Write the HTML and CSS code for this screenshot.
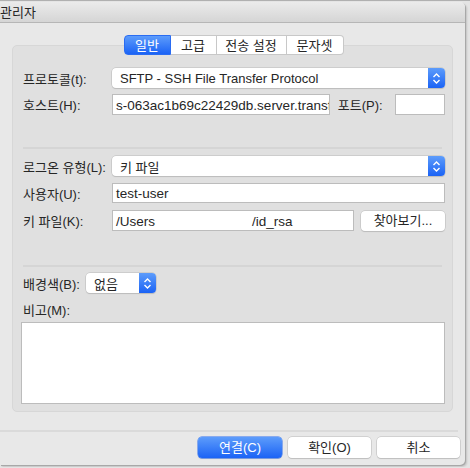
FILE: index.html
```html
<!DOCTYPE html>
<html lang="ko">
<head>
    <meta charset="UTF-8">
    <meta name="viewport" content="width=device-width, initial-scale=1.0">
    <title>관리자</title>
    <link rel="stylesheet" href="styles.css">
</head>
<body>
    <div class="window">
        <div class="titlebar">관리자</div>
        <div class="content">
            <div class="tabs">
                <div class="tab active w1">일반</div>
                <div class="tab w2">고급</div>
                <div class="tab w3">전송 설정</div>
                <div class="tab w4">문자셋</div>
            </div>
            <div class="panel">
                <div class="row r-protocol">
                    <div class="label">프로토콜(t):</div>
                    <div class="select grow">
                        <span class="select-text">SFTP - SSH File Transfer Protocol</span>
                        <span class="stepper"><svg width="9" height="13" viewBox="0 0 9 13"><path d="M1.5 5 L4.5 2 L7.5 5 M1.5 8 L4.5 11 L7.5 8" fill="none" stroke="#fff" stroke-width="1.4"/></svg></span>
                    </div>
                </div>
                <div class="row r-host">
                    <div class="label">호스트(H):</div>
                    <div class="input host"><span class="host-text">s-063ac1b69c22429db.server.transfer</span></div>
                    <div class="label port-label">포트(P):</div>
                    <div class="input port"></div>
                </div>
                <div class="sep sep1"></div>
                <div class="row r-login">
                    <div class="label">로그온 유형(L):</div>
                    <div class="select grow">
                        <span class="select-text">키 파일</span>
                        <span class="stepper"><svg width="9" height="13" viewBox="0 0 9 13"><path d="M1.5 5 L4.5 2 L7.5 5 M1.5 8 L4.5 11 L7.5 8" fill="none" stroke="#fff" stroke-width="1.4"/></svg></span>
                    </div>
                </div>
                <div class="row r-user">
                    <div class="label">사용자(U):</div>
                    <div class="input grow">test-user</div>
                </div>
                <div class="row r-key">
                    <div class="label">키 파일(K):</div>
                    <div class="input keyfile"><span class="path-start">/Users</span>/id_rsa</div>
                    <div class="button browse">찾아보기...</div>
                </div>
                <div class="sep sep2"></div>
                <div class="row r-bg">
                    <div class="label short">배경색(B):</div>
                    <div class="select color">
                        <span class="select-text">없음</span>
                        <span class="stepper"><svg width="9" height="13" viewBox="0 0 9 13"><path d="M1.5 5 L4.5 2 L7.5 5 M1.5 8 L4.5 11 L7.5 8" fill="none" stroke="#fff" stroke-width="1.4"/></svg></span>
                    </div>
                </div>
                <div class="memo-label">비고(M):</div>
                <div class="memo"></div>
            </div>
            <div class="footer-sep"></div>
            <div class="buttons">
                <div class="button primary">연결(C)</div>
                <div class="button">확인(O)</div>
                <div class="button">취소</div>
            </div>
        </div>
    </div>
</body>
</html>
```

FILE: styles.css
```css
body {
    margin: 0;
    padding-top: 1px;
    height: 467px;
    overflow: hidden;
    background-color: #e4e4e4;
    font-family: "Liberation Sans", "Noto Sans CJK KR", sans-serif;
    font-size: 13px;
    color: #262626;
    border-top: 1px solid #b0b0b0;
    box-sizing: border-box;
}
.window {
    width: 465px;
    height: 463px;
    background-color: #e8e8e8;
    border-radius: 0 5px 5px 0;
    box-shadow: 1px 1px 0 #a8a8a8, 2px 2px 2px rgba(0,0,0,0.15);
    overflow: hidden;
}
.titlebar {
    height: 20px;
    line-height: 21px;
    background: linear-gradient(#ebebeb, #d5d5d5);
    border-bottom: 1px solid #b6b6b6;
}
.content {
    padding-top: 12px;
}
.tabs {
    display: flex;
    justify-content: center;
    position: relative;
    z-index: 1;
    margin-left: 2px;
    margin-bottom: -10px;
}
.tab {
    height: 20px;
    line-height: 20px;
    text-align: center;
    background-color: #fff;
    border: 1px solid #c8c8c8;
    border-left: none;
    box-sizing: border-box;
}
.tab:first-child {
    border-left: 1px solid #c8c8c8;
    border-radius: 4px 0 0 4px;
}
.tab:last-child {
    border-radius: 0 4px 4px 0;
}
.tab.active {
    background: linear-gradient(#5d9cfb, #1b63f5);
    border-color: #2a6cf2;
    color: #fff;
}
.w1 { width: 47px; }
.w2 { width: 46px; }
.w3 { width: 70px; }
.w4 { width: 57px; }
.panel {
    margin-left: 12px;
    width: 441px;
    box-sizing: border-box;
    background-color: #e0e0e0;
    border: 1px solid #d7d7d7;
    border-radius: 5px;
    padding: 22px 7px 7px 10px;
}
.row {
    display: flex;
    align-items: center;
}
.label {
    width: 89px;
    flex-shrink: 0;
}
.label.short {
    width: 63px;
}
.grow {
    flex: 1;
}
.select {
    height: 20px;
    display: flex;
    align-items: center;
    background-color: #fff;
    border-radius: 4px;
    box-shadow: 0 0 0 0.5px #b9b9b9, 0 1px 1px rgba(0,0,0,0.15);
    overflow: hidden;
}
.select-text {
    flex: 1;
    padding-left: 8px;
}
.stepper {
    width: 17px;
    height: 20px;
    display: flex;
    align-items: center;
    justify-content: center;
    background: linear-gradient(#5d9cfb, #1b63f5);
}
.select.color {
    width: 70px;
}
.input {
    height: 21px;
    line-height: 21px;
    box-sizing: border-box;
    background-color: #fff;
    border: 1px solid #bcbcbc;
    padding-left: 3px;
    white-space: nowrap;
    overflow: hidden;
    font-size: 13.5px;
}
.input.grow {
    height: 20px;
    line-height: 19px;
}
.host {
    width: 221px;
}
.host-text {
    display: inline-block;
    width: 214px;
    overflow: hidden;
    vertical-align: top;
}
.port-label {
    width: auto;
    margin-left: 8px;
    margin-right: 12px;
}
.port {
    width: 51px;
}
.keyfile {
    width: 242px;
}
.path-start {
    display: inline-block;
    width: 136px;
}
.button {
    height: 20px;
    line-height: 20px;
    text-align: center;
    background-color: #fff;
    border-radius: 4px;
    box-shadow: 0 0 0 0.5px #b9b9b9, 0 1px 1px rgba(0,0,0,0.15);
}
.browse {
    width: 84px;
    margin-left: 7px;
}
.r-protocol { margin-top: 0; }
.r-host { margin-top: 6px; }
.r-login { margin-top: 7px; }
.r-user { margin-top: 7px; }
.r-key { margin-top: 7px; }
.r-bg { margin-top: 6px; }
.sep {
    height: 2px;
    background-color: #d5d5d5;
    margin-right: 3px;
}
.sep1 { margin-top: 32px; }
.sep2 { margin-top: 34px; }
.memo-label {
    margin-top: 10px;
    height: 16px;
    line-height: 16px;
}
.memo {
    margin-top: 3px;
    margin-left: -2px;
    height: 82px;
    box-sizing: border-box;
    background-color: #fff;
    border: 1px solid #bcbcbc;
}
.footer-sep {
    margin-top: 18px;
    width: 458px;
    height: 2px;
    background-color: #dadada;
}
.buttons {
    display: flex;
    justify-content: flex-end;
    gap: 6px;
    margin-top: 5px;
    padding-right: 5px;
}
.buttons .button {
    width: 83px;
    height: 21px;
    line-height: 21px;
}
.buttons .primary {
    width: 84px;
    background: linear-gradient(#5d9cfb, #1b63f5);
    color: #fff;
    box-shadow: 0 0 0 0.5px #2a6cf2, 0 1px 1px rgba(0,0,0,0.15);
}
```
